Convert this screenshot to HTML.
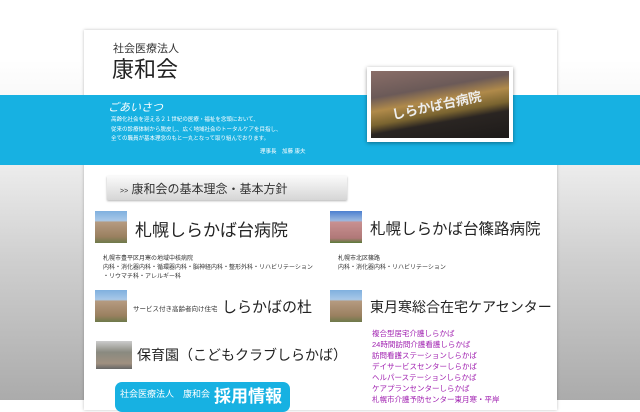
<!DOCTYPE html>
<html><head><meta charset="utf-8"><style>
*{margin:0;padding:0;box-sizing:border-box}
body{width:640px;height:400px;overflow:hidden;position:relative;font-family:"Liberation Sans","Noto Sans CJK JP",sans-serif;background:linear-gradient(#fff 0,#fff 60px,#ebebeb 170px,#cfcfcf 260px,#ababab 400px)}
.page{position:absolute;left:84px;top:30px;width:473px;height:380px;background:#fff;box-shadow:0 0 3px rgba(0,0,0,.25)}
.band{position:absolute;left:0;top:95px;width:640px;height:70px;background:#17b1e2}
.a{position:absolute;white-space:nowrap}
.photo{position:absolute;left:367px;top:67px;width:146px;height:75px;background:#fff;padding:4px;box-shadow:0 1px 4px rgba(0,0,0,.4)}
.photo div{width:100%;height:100%;background:linear-gradient(170deg,#8a6e68 0,#6b5a58 30%,#b08a4a 45%,#7a6430 60%,#2a2522 70%,#1d1a19 100%);position:relative;overflow:hidden}
.thumb{position:absolute;width:32px;height:32px;background:linear-gradient(#7fb0de 0,#a8c8e8 30%,#b59a80 35%,#9a8060 80%,#6d7a4a 100%)}
.s{font-size:6px;color:#333;line-height:9px}
.m{font-size:7.5px;color:#a020b0;line-height:11px}
</style></head><body>
<div class="page"></div>
<div class="band"></div>
<div class="a" style="left:113px;top:40px;font-size:11px;color:#333">社会医療法人</div>
<div class="a" style="left:112px;top:52px;font-size:22px;color:#222">康和会</div>
<div class="a" style="left:108px;top:99px;font-size:11px;color:#fff;font-style:italic">ごあいさつ</div>
<div class="a" style="left:111px;top:116px;font-size:5.5px;color:#fff;line-height:9.5px">高齢化社会を迎える２１世紀の医療・福祉を念頭において、<br>従来の診療体制から脱皮し、広く地域社会のトータルケアを目指し、<br>全ての職員が基本理念のもと一丸となって取り組んでおります。</div>
<div class="a" style="left:260px;top:147px;font-size:5.5px;color:#fff">理事長　加藤 康夫</div>
<div class="photo"><div><span class="a" style="left:20px;top:24px;color:#eee;font-size:13px;font-weight:bold;transform:rotate(-12deg)">しらかば台病院</span></div></div>
<div class="a" style="left:107px;top:176px;width:240px;height:24px;background:linear-gradient(#fafafa,#d6d6d6);box-shadow:0 1px 2px rgba(0,0,0,.3)"></div>
<div class="a" style="left:120px;top:180px;font-size:12px;color:#333"><span style="font-size:7px">&gt;&gt;</span> 康和会の基本理念・基本方針</div>
<div class="thumb" style="left:95px;top:211px"></div>
<div class="a" style="left:135px;top:216px;font-size:17px;color:#222">札幌しらかば台病院</div>
<div class="a s" style="left:103px;top:255px">札幌市豊平区月寒の地域中核病院<br>内科・消化器内科・循環器内科・脳神経内科・整形外科・リハビリテーション<br>・リウマチ科・アレルギー科</div>
<div class="thumb" style="left:330px;top:211px;background:linear-gradient(#4c7fcf,#9ab8e0 30%,#c89090 35%,#b07878 85%,#5a7a3a)"></div>
<div class="a" style="left:370px;top:217px;font-size:15.5px;color:#222">札幌しらかば台篠路病院</div>
<div class="a s" style="left:338px;top:255px">札幌市北区篠路<br>内科・消化器内科・リハビリテーション</div>
<div class="thumb" style="left:95px;top:290px"></div>
<div class="a" style="left:133px;top:303px;font-size:6.5px;color:#333">サービス付き高齢者向け住宅</div>
<div class="a" style="left:222px;top:296px;font-size:15px;color:#222">しらかばの杜</div>
<div class="thumb" style="left:330px;top:290px"></div>
<div class="a" style="left:370px;top:297px;font-size:14px;color:#222">東月寒総合在宅ケアセンター</div>
<div class="a m" style="left:372px;top:328px">複合型居宅介護しらかば<br>24時間訪問介護看護しらかば<br>訪問看護ステーションしらかば<br>デイサービスセンターしらかば<br>ヘルパーステーションしらかば<br>ケアプランセンターしらかば<br>札幌市介護予防センター東月寒・平岸</div>
<div class="thumb" style="left:96px;top:341px;width:36px;height:28px;background:linear-gradient(#ccc,#8a8a80 40%,#a09080 80%,#666)"></div>
<div class="a" style="left:137px;top:345px;font-size:14px;color:#222">保育園（こどもクラブしらかば）</div>
<div class="a" style="left:115px;top:382px;width:175px;height:30px;border-radius:7px;background:#17b1e2"></div>
<div class="a" style="left:120px;top:387px;font-size:9px;color:#fff">社会医療法人　康和会</div>
<div class="a" style="left:214px;top:382px;font-size:17px;color:#fff;font-weight:bold">採用情報</div>
</body></html>
